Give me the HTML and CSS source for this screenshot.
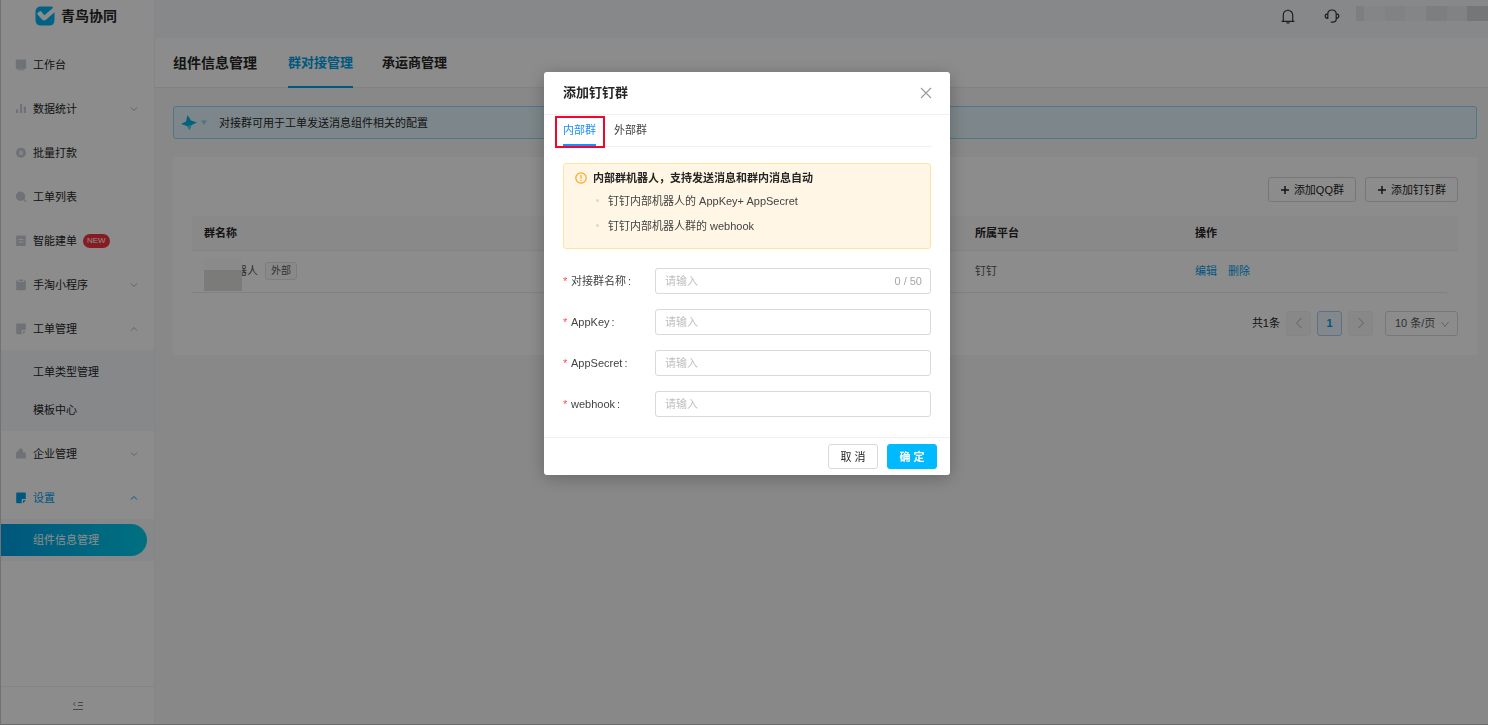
FILE: index.html
```html
<!DOCTYPE html>
<html lang="zh-CN">
<head>
<meta charset="utf-8">
<meta name="viewport" content="width=device-width, initial-scale=1">
<title>青鸟协同 - 组件信息管理</title>
<link rel="stylesheet" href="styles.css">
</head>
<body>
<div class="app">
  <aside class="sidebar">
    <div class="brand">
      <svg class="brand-mark" viewBox="0 0 20 20"><path d="M6 .5h9.500q2 0 2.700 1.300L9.300 9.300 6.500 5.700Q5.500 4.600 4.400 5.400L2.700 6.700Q1.800 7.600 2.700 8.800L7 13.600q2 1.900 4 .2l8.500-7.500V14q0 5.500-5.500 5.500H6Q.5 19.500.5 14V6Q.5.5 6 .5z" fill="#00b2f0"/></svg>
      <span>青鸟协同</span>
    </div>
    <nav class="menu">
      <a class="item" href="#"><svg class="ico" viewBox="0 0 12 12"><path d="M1.500.5h9q.7 0 .7.700V9q0 .7-.7.700h-9Q.8 9.700.8 9V1.200Q.8.5 1.500.5zM2.500 10.300h7v.9h-7z"/></svg>工作台</a>
      <a class="item" href="#"><svg class="ico" viewBox="0 0 12 12"><path d="M1 6.500h2.200V10H1zM5 1h2.200v9H5zM8.800 3.500H11V10H8.800z"/></svg>数据统计<svg class="chev" viewBox="0 0 8 8"><path d="M1 2.500 4 5.500 7 2.500"/></svg></a>
      <a class="item" href="#"><svg class="ico" viewBox="0 0 12 12"><circle cx="6" cy="5.700" r="5"/><path d="M6 3 8.200 5.500 7.500 8h-3L3.800 5.500z" fill="#edf0f3"/></svg>批量打款</a>
      <a class="item" href="#"><svg class="ico" viewBox="0 0 12 12"><circle cx="5.500" cy="5.300" r="4.700"/><path d="m8 9 1.200-1.200L11.500 10l-1 1z"/></svg>工单列表</a>
      <a class="item" href="#"><svg class="ico" viewBox="0 0 12 12"><rect x="1.200" y="0.500" width="9.600" height="10.500" rx="1"/><path d="M3.700 4h4.600v1H3.700zM3.700 6.500h4.600v1H3.700z" fill="#fff"/></svg>智能建单<span class="new">NEW</span></a>
      <a class="item" href="#"><svg class="ico" viewBox="0 0 12 12"><path d="M1.200 1.500h2V3h5.600V1.500h2V11.300H1.200zM4 .5h4v1.700H4z"/></svg>手淘小程序<svg class="chev" viewBox="0 0 8 8"><path d="M1 2.500 4 5.500 7 2.500"/></svg></a>
      <a class="item" href="#"><svg class="ico" viewBox="0 0 12 12"><path d="M2 .5h8q.8 0 .8.800V7H7.500q-.8 0-.8.800v3.500H2q-.8 0-.8-.800V1.300Q1.200.5 2 .5zM8 8.300h2.800L8 11.200z"/></svg>工单管理<svg class="chev" viewBox="0 0 8 8"><path d="M1 5.500 4 2.500 7 5.500"/></svg></a>
      <div class="sub">
        <a class="subitem" href="#">工单类型管理</a>
        <a class="subitem" href="#">模板中心</a>
      </div>
      <a class="item" href="#"><svg class="ico" viewBox="0 0 12 12"><path d="M1 4.500 3.500 3V1.500L6 .3l1.800 1.200V4l3 .5v6H1z"/></svg>企业管理<svg class="chev" viewBox="0 0 8 8"><path d="M1 2.500 4 5.500 7 2.500"/></svg></a>
      <a class="item active" href="#"><svg class="ico" viewBox="0 0 12 12"><path d="M2 .5h8q.8 0 .8.800V7H7.500q-.8 0-.8.800v3.500H2q-.8 0-.8-.800V1.300Q1.200.5 2 .5zM8 8.300h2.800L8 11.200z"/></svg>设置<svg class="chev" viewBox="0 0 8 8"><path d="M1 5.500 4 2.500 7 5.500"/></svg></a>
      <div class="sub current">
        <a class="pill" href="#">组件信息管理</a>
      </div>
    </nav>
    <button class="fold" aria-label="收起菜单"><svg viewBox="0 0 12 12"><path d="M6 2.500h5M6 5.500h5M1 9.500h10M3.500 2 1.500 4l2 2"/></svg></button>
  </aside>

  <div class="main">
    <header class="topbar">
      <button class="tool" aria-label="通知"><svg viewBox="0 0 16 16"><path d="M1.500 13.300h13M3.300 13V7.300C3.300 4.200 5.200 2.500 8 2.500s4.700 1.700 4.700 4.800V13M6.500 14.800h3M8 1.500v1"/></svg></button>
      <button class="tool" aria-label="客服"><svg viewBox="0 0 16 16"><path d="M3.800 6C3.800 3.500 5.500 2 8 2s4.200 1.500 4.200 4v5.500c0 1.300-1 2.300-2.700 2.600M3.800 5.800C2.200 5.800 1.200 6.800 1.200 8s1 2.300 2.600 2.300zM12.200 5.800c1.600 0 2.600 1 2.600 2.200s-1 2.300-2.600 2.300M6.800 14.200h3"/></svg></button>
      <div class="mosaic"><i class="m2"></i><i class="m0"></i><i class="m1"></i><i class="m0"></i><i class="m2"></i><i class="m1"></i><i class="m3"></i></div>
    </header>
    <div class="pagehead">
      <h1>组件信息管理</h1>
      <nav class="tabs"><a class="tab on" href="#">群对接管理</a><a class="tab" href="#">承运商管理</a></nav>
    </div>
    <main class="content">
      <div class="tip">
        <svg class="bird" viewBox="0 0 16 16"><path d="M6.500 0 10 5.500 16 7.500 10.500 10 8.500 15 6 11 0 9 5 6.500z" fill="#00b4e4"/><path d="M6 11 10.500 10 8.500 15z" fill="#5cd0f0"/></svg>
        <svg class="caret" viewBox="0 0 8 8"><path d="M1 1.500h6L4 6z" fill="#86d8f0"/></svg>
        <span>对接群可用于工单发送消息组件相关的配置</span>
      </div>
      <section class="card">
        <div class="actions">
          <button class="btn"><svg class="plus" viewBox="0 0 10 10"><path d="M5 1v8M1 5h8"/></svg>添加QQ群</button>
          <button class="btn"><svg class="plus" viewBox="0 0 10 10"><path d="M5 1v8M1 5h8"/></svg>添加钉钉群</button>
        </div>
        <table class="grid">
          <thead><tr><th>群名称</th><th class="c-plat">所属平台</th><th class="c-op">操作</th><th class="c-gut"></th></tr></thead>
          <tbody><tr>
            <td><div class="name"><span>器人</span><span class="masked"></span><span class="tag">外部</span></div></td>
            <td>钉钉</td>
            <td><div class="ops"><a href="#">编辑</a><a href="#">删除</a></div></td>
          </tr></tbody>
        </table>
        <div class="pager">
          <span>共1条</span>
          <button class="pg off" aria-label="上一页"><svg viewBox="0 0 12 12"><path d="M8.500 1 3.500 6l5 5"/></svg></button>
          <button class="pg cur">1</button>
          <button class="pg off" aria-label="下一页"><svg viewBox="0 0 12 12"><path d="m3.500 1 5 5-5 5"/></svg></button>
          <div class="size"><select aria-label="每页条数"><option>10 条/页</option></select><svg viewBox="0 0 8 8"><path d="M.5 2 4 6.500 7.500 2"/></svg></div>
        </div>
      </section>
    </main>
  </div>
</div>

<div class="overlay">
  <div class="modal" role="dialog" aria-labelledby="dlg-title">
    <div class="m-head">
      <h2 id="dlg-title">添加钉钉群</h2>
      <button class="close" aria-label="关闭"><svg viewBox="0 0 12 12"><path d="M1 1l10 10M11 1 1 11"/></svg></button>
    </div>
    <div class="m-body">
      <div class="m-tabs"><button class="m-tab on">内部群<span class="mark"></span></button><button class="m-tab">外部群</button></div>
      <div class="warn">
        <svg class="w-ico" viewBox="0 0 12 12"><circle cx="6" cy="6" r="5.200" fill="none" stroke="#ffa31a" stroke-width="1.200"/><path d="M5.400 3h1.200v3.800H5.400zM5.400 7.700h1.200v1.200H5.400z" fill="#ffa31a"/></svg>
        <div>
          <strong>内部群机器人，支持发送消息和群内消息自动</strong>
          <ul><li>钉钉内部机器人的 AppKey+ AppSecret</li><li>钉钉内部机器人群的 webhook</li></ul>
        </div>
      </div>
      <form class="form">
        <div class="row"><label for="f1">对接群名称<i>:</i></label><div class="field"><input id="f1" placeholder="请输入"><span>0 / 50</span></div></div>
        <div class="row"><label for="f2">AppKey<i>:</i></label><div class="field"><input id="f2" placeholder="请输入"></div></div>
        <div class="row"><label for="f3">AppSecret<i>:</i></label><div class="field"><input id="f3" placeholder="请输入"></div></div>
        <div class="row"><label for="f4">webhook<i>:</i></label><div class="field"><input id="f4" placeholder="请输入"></div></div>
      </form>
    </div>
    <div class="m-foot"><button class="btn wide">取 消</button><button class="btn wide primary">确 定</button></div>
  </div>
</div>
</body>
</html>
```

FILE: styles.css
```css
* { box-sizing: border-box; }
body {
  margin: 0;
  font: 11px/16px "Liberation Sans", "Noto Sans CJK SC", sans-serif;
  color: #262626;
}
a { color: inherit; text-decoration: none; }
button, input, select { font: inherit; color: inherit; margin: 0; }
button { padding: 0; border: 0; background: none; }
svg { display: block; flex: none; }
h1, h2 { margin: 0; }

.app {
  display: flex;
  min-height: 100vh;
  background: #f7f7f7;
  border-left: 1px solid #d0d0d0;
  border-bottom: 1px solid #c4c4c4;
}

/* sidebar */
.sidebar {
  width: 154px;
  flex: none;
  display: flex;
  flex-direction: column;
  background: #fff;
  border-right: 1px solid #f2f2f2;
}
.brand {
  height: 42px;
  padding: 0 0 10px 34px;
  display: flex;
  align-items: center;
  gap: 6px;
  font-size: 14px;
  font-weight: 700;
}
.brand-mark { width: 20px; height: 20px; }
.menu { flex: 1; }
.item {
  height: 44px;
  padding: 2px 16px 0 14px;
  display: flex;
  align-items: center;
}
.ico { width: 12px; height: 12px; margin-right: 6px; fill: #c8d0d8; }
.chev { width: 8px; height: 8px; margin-left: auto; fill: none; stroke: #b0b0b0; }
.active { color: #009fe8; }
.active .ico { fill: #009fe8; }
.active .chev { stroke: #009fe8; }
.new {
  margin-left: 6px;
  padding: 0 4px;
  height: 14px;
  font-size: 8px;
  line-height: 14px;
  border-radius: 7px;
  background: #f5323c;
  color: #fff;
}
.sub { padding: 2px 0 3px; background: #f5f8fc; }
.subitem { display: flex; align-items: center; height: 38px; padding: 2px 0 0 32px; }
.current { padding: 5px 0; }
.pill {
  display: flex;
  align-items: center;
  height: 32px;
  margin-right: 7px;
  padding-left: 32px;
  border-radius: 0 16px 16px 0;
  background: linear-gradient(90deg, #009fe3, #00cdea);
  color: #fff;
}
.fold {
  height: 38px;
  border-top: 1px solid #f0f0f0;
  display: flex;
  align-items: center;
  justify-content: center;
}
.fold svg { width: 12px; height: 12px; fill: none; stroke: #888; }

/* page */
.main { flex: 1; min-width: 0; display: flex; flex-direction: column; }
.topbar {
  height: 38px;
  padding-bottom: 6px;
  display: flex;
  align-items: center;
  justify-content: flex-end;
  background: #f5f7fa;
}
.tool { margin-right: 28px; }
.tool + .tool { margin-right: 16px; }
.tool svg { width: 16px; height: 16px; fill: none; stroke: #3a3a3a; stroke-width: 1.2; }
.mosaic { display: flex; width: 132px; height: 15px; margin-bottom: 5px; }
.mosaic i { flex: 1; }
.mosaic .m2:first-child { flex: 0 0 8px; }
.m0 { background: #f1f3f5; }
.m1 { background: #ebedef; }
.m2 { background: #e3e5e7; }
.m3 { background: #d3d8da; }
.pagehead {
  height: 50px;
  padding-left: 18px;
  display: flex;
  gap: 31px;
  background: #fff;
  border-bottom: 1px solid #ececec;
}
h1 { font-size: 14px; line-height: 50px; }
.tabs { display: flex; gap: 29px; height: 50px; }
.tab { font-size: 13px; line-height: 49px; font-weight: 700; border-bottom: 2px solid transparent; }
.tab.on { color: #009fe8; border-color: #009fe8; }
.content { padding: 18px 11px 18px 18px; }
.tip {
  height: 33px;
  margin-bottom: 18px;
  padding-left: 7px;
  display: flex;
  align-items: center;
  border: 1px solid #91d9f7;
  border-radius: 3px;
  background: #e3f5fc;
}
.bird { width: 16px; height: 16px; }
.caret { width: 8px; height: 8px; margin: 0 11px 0 3px; }
.card { padding: 20px 19px 19px; background: #fff; }
.actions { display: flex; justify-content: flex-end; gap: 9px; margin-bottom: 14px; }
.btn {
  height: 25px;
  padding: 0 11px;
  display: flex;
  align-items: center;
  justify-content: center;
  gap: 4px;
  border: 1px solid #d9d9d9;
  border-radius: 3px;
  background: #fff;
}
.plus { width: 10px; height: 10px; stroke: #262626; stroke-width: 1.5; }
.grid { width: 100%; table-layout: fixed; border-collapse: collapse; }
.grid th {
  height: 34px;
  padding: 0 12px;
  text-align: left;
  background: #fafafa;
  border-bottom: 1px solid #f0f0f0;
}
.grid td { height: 42px; padding: 0 12px; border-bottom: 1px solid #ececec; color: #595959; }
.grid .c-plat { width: 220px; }
.grid .c-op { width: 264px; }
.grid .c-gut { width: 11px; padding: 0; }
.name { position: relative; display: flex; align-items: center; padding-left: 32px; }
.masked {
  position: absolute;
  left: 0;
  top: -4px;
  width: 38px;
  height: 33px;
  background: linear-gradient(#fcfcfc 12px, #e0e0de 12px);
}
.tag {
  margin-left: 7px;
  padding: 0 5px;
  font-size: 10px;
  border: 1px solid #e4e4e4;
  border-radius: 3px;
  background: #fafafa;
}
.ops { display: flex; gap: 11px; color: #009fe8; }
.pager { display: flex; align-items: center; justify-content: flex-end; gap: 6px; margin-top: 18px; }
.pg {
  width: 25px;
  height: 25px;
  display: flex;
  align-items: center;
  justify-content: center;
  border: 1px solid #f3f3f3;
  border-radius: 3px;
  background: #f7f7f7;
}
.pg svg { width: 12px; height: 12px; fill: none; stroke: #b0b0b0; }
.pg.cur { border-color: #a9cdf5; background: #f0f8ff; color: #009fe8; font-weight: 700; }
.size { position: relative; margin-left: 6px; }
.size select {
  display: block;
  appearance: none;
  width: 73px;
  height: 25px;
  padding: 0 18px 0 9px;
  border: 1px solid #d9d9d9;
  border-radius: 3px;
  background: #fff;
  color: #595959;
}
.size svg { position: absolute; right: 9px; top: 9px; width: 8px; height: 8px; fill: none; stroke: #b0b0b0; }

/* dialog */
.overlay {
  position: fixed;
  inset: 0;
  padding: 72px 0 0 6px;
  background: rgba(0, 0, 0, .45);
}
.modal {
  width: 406px;
  margin: 0 auto;
  border-radius: 3px;
  background: #fff;
  box-shadow: 0 3px 18px rgba(0, 0, 0, .25);
}
.m-head {
  height: 43px;
  padding: 0 18px 0 19px;
  display: flex;
  align-items: center;
  justify-content: space-between;
  border-bottom: 1px solid #f0f0f0;
}
h2 { font-size: 13px; line-height: 20px; }
.close svg { width: 12px; height: 12px; fill: none; stroke: #999; stroke-width: 1.1; }
.m-body { padding: 0 19px 20px; }
.m-tabs { display: flex; gap: 18px; height: 32px; border-bottom: 1px solid #f0f0f0; }
.m-tab { position: relative; padding-top: 1px; border-bottom: 2px solid transparent; color: #434343; }
.m-tab.on { color: #1890ff; border-color: #1890ff; }
.mark { position: absolute; inset: 1px -9px -4px -8px; border: 2px solid #f5052d; }
.warn {
  margin: 16px 0 19px;
  padding: 6px 11px 9px;
  display: flex;
  gap: 6px;
  border: 1px solid #ffe3a3;
  border-radius: 3px;
  background: #fff6e5;
}
.w-ico { width: 12px; height: 12px; margin-top: 2px; }
.warn ul { margin: 3px 0 0; padding: 0; list-style: none; color: #434343; }
.warn li { display: flex; align-items: center; gap: 9px; height: 25px; padding: 0 0 2px 3px; }
.warn li::before { content: ""; width: 3px; height: 3px; border-radius: 50%; background: #d9d9d9; }
.form { display: flex; flex-direction: column; gap: 15px; }
.row { display: flex; align-items: center; color: #434343; }
.row label { width: 92px; display: flex; }
.row label::before { content: "*"; width: 8px; color: #ff4d4f; }
.row label i { margin-left: 2px; font-style: normal; }
.field {
  flex: 1;
  height: 26px;
  padding: 0 8px 0 9px;
  display: flex;
  align-items: center;
  border: 1px solid #d9d9d9;
  border-radius: 3px;
  color: #a6a6a6;
}
.field input { flex: 1; min-width: 0; padding: 0; border: 0; outline: 0; background: none; }
.field input::placeholder { color: #bfbfbf; }
.m-foot {
  padding: 6px 13px;
  display: flex;
  justify-content: flex-end;
  gap: 9px;
  border-top: 1px solid #f0f0f0;
}
.wide { width: 50px; padding: 0; }
.primary { background: #00baff; border-color: #00baff; color: #fff; font-weight: 700; }
```
